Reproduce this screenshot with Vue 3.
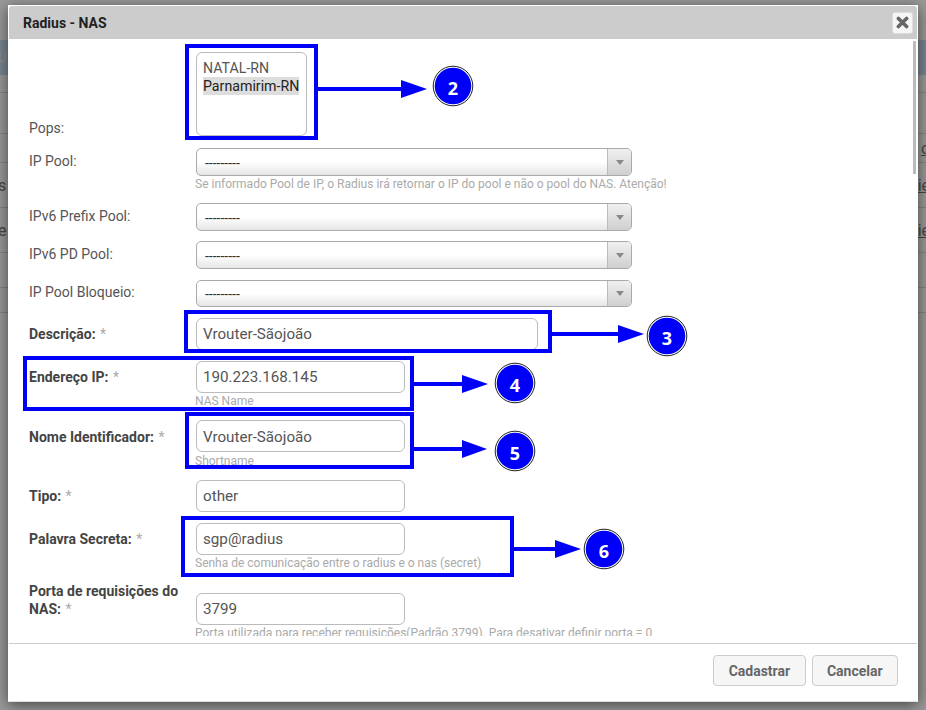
<script setup>
const fields = [
  { label: 'IP Pool:', type: 'is-select', help: 'Se informado Pool de IP, o Radius irá retornar o IP do pool e não o pool do NAS. Atenção!', cls: 'g11' },
  { label: 'IPv6 Prefix Pool:', type: 'is-select', cls: 'g10' },
  { label: 'IPv6 PD Pool:', type: 'is-select', cls: 'g11' },
  { label: 'IP Pool Bloqueio:', type: 'is-select', cls: 'g11 short' },
  { label: 'Descrição:', req: true, type: 'is-input', value: 'Vrouter-Sãojoão', cls: 'g11 wide' },
  { label: 'Endereço IP:', req: true, type: 'is-input', value: '190.223.168.145', help: 'NAS Name', cls: 'g12' },
  { label: 'Nome Identificador:', req: true, type: 'is-input', value: 'Vrouter-Sãojoão', help: 'Shortname', cls: 'g12 nudge' },
  { label: 'Tipo:', req: true, type: 'is-input', value: 'other', cls: 'g11' },
  { label: 'Palavra Secreta:', req: true, type: 'is-input', value: 'sgp@radius', help: 'Senha de comunicação entre o radius e o nas (secret)', cls: 'g12' },
  { label: 'Porta de requisições do NAS:', req: true, type: 'is-input', value: '3799', help: 'Porta utilizada para receber requisições(Padrão 3799). Para desativar definir porta = 0', cls: 'tall' }
]

const callouts = [
  { n: 2, box: [187, 46, 129, 92], y: 89, x1: 318, x2: 401, tip: 427, cx: 453, cy: 86 },
  { n: 3, box: [186, 312, 364, 39], y: 334, x1: 552, x2: 618, tip: 644, cx: 667, cy: 336 },
  { n: 4, box: [25, 358, 387, 51], y: 384, x1: 414, x2: 462, tip: 488, cx: 515, cy: 383 },
  { n: 5, box: [187, 414, 225, 53], y: 449, x1: 414, x2: 462, tip: 487, cx: 515, cy: 451 },
  { n: 6, box: [183, 518, 329, 57], y: 549, x1: 514, x2: 555, tip: 581, cx: 604, cy: 549 }
]

const bgRows = [
  { h: 18, left: '', right: '' },
  { h: 41, left: '', right: '' },
  { h: 29, left: '', right: 'o' },
  { h: 45, left: 's', right: 'ie' },
  { h: 45, left: 'e', right: 'ie' },
  { h: 35, left: '', right: '' },
  { h: 25, left: '', right: '' }
]
</script>

<template>
  <div class="page">
    <div class="bg-top"></div>
    <div class="bg-band"><span>US</span></div>
    <div v-for="(r, i) in bgRows" :key="i" class="bg-row" :style="{ height: r.h + 'px' }">
      <span class="bg-l">{{ r.left }}</span>
      <span class="bg-r">{{ r.right }}</span>
    </div>
    <div class="backdrop"></div>

    <div class="dialog">
      <header class="head">
        <h2>Radius - NAS</h2>
        <button class="close" aria-label="Fechar">
          <svg width="13" height="13" viewBox="0 0 13 13"><path d="M2.4 2.4l8.2 8.2M10.6 2.4l-8.2 8.2" stroke="#666" stroke-width="3.6" stroke-linecap="round" fill="none" /></svg>
        </button>
      </header>

      <div class="body">
        <div class="scroll">
          <div class="row pops">
            <label>Pops:</label>
            <div class="list">
              <div class="opt">NATAL-RN</div>
              <div class="opt sel">Parnamirim-RN</div>
            </div>
          </div>

          <div v-for="f in fields" :key="f.label" class="row" :class="[f.type, f.cls]">
            <label><b v-if="f.req">{{ f.label }}</b><template v-else>{{ f.label }}</template><i v-if="f.req"> *</i></label>
            <div class="ctl">
              <div v-if="f.type === 'is-select'" class="select">
                <span>---------</span>
                <em><u></u></em>
              </div>
              <div v-else class="input">{{ f.value }}</div>
              <small v-if="f.help">{{ f.help }}</small>
            </div>
          </div>
        </div>
        <div class="thumb"></div>
      </div>

      <footer class="foot">
        <button>Cadastrar</button>
        <button>Cancelar</button>
      </footer>
    </div>

    <svg class="marks" width="926" height="710" viewBox="0 0 926 710">
      <g v-for="c in callouts" :key="c.n">
        <rect :x="c.box[0]" :y="c.box[1]" :width="c.box[2]" :height="c.box[3]" fill="none" stroke="#0000f8" stroke-width="4" />
        <rect :x="c.x1" :y="c.y - 2" :width="c.x2 - c.x1" height="4" fill="#0000f8" />
        <polygon :points="`${c.x2},${c.y - 9} ${c.tip},${c.y} ${c.x2},${c.y + 9}`" fill="#0000f8" />
        <circle :cx="c.cx" :cy="c.cy" r="19.8" fill="#fff" stroke="#222" stroke-width="1" />
        <circle :cx="c.cx" :cy="c.cy" r="18.3" fill="#0000f8" />
        <text :x="c.cx" :y="c.cy + 8.5" text-anchor="middle" class="num">{{ c.n }}</text>
      </g>
    </svg>
  </div>
</template>

<style scoped>
.page { position: relative; width: 926px; height: 710px; overflow: hidden; background: #fff; font-family: Roboto, "Liberation Sans", sans-serif; color: #555; }
.bg-top { height: 40px; }
.bg-band { height: 35px; background: #c9dff0; color: #eee; font-size: 14px; line-height: 35px; }
.bg-band span { margin-left: -2px; }
.bg-row { box-sizing: border-box; border-bottom: 1px solid #ddd; display: flex; justify-content: space-between; align-items: center; font-size: 16px; color: #777; }
.bg-r { text-decoration: underline; margin-right: -4px; }
.bg-l { margin-left: -2px; }
.backdrop { position: absolute; inset: 0; background: rgba(0, 0, 0, .4); }

.dialog { position: absolute; left: 8px; top: 5px; width: 910px; height: 697px; box-sizing: border-box; background: #fff; border: 1px solid #fff; border-bottom-color: #ddd; box-shadow: 0 3px 14px rgba(0, 0, 0, .55); display: flex; flex-direction: column; }
.head { height: 33px; flex: none; background: #ccc; display: flex; align-items: center; justify-content: space-between; padding: 0 4px 0 14px; border-radius: 3px 3px 0 0; }
h2 { margin: 0; font-size: 14px; font-weight: 700; color: #222; }
.close { width: 21px; height: 22px; padding: 0; border: 1px solid #ddd; border-radius: 3px; background: #f6f6f6; display: flex; align-items: center; justify-content: center; }

.body { position: relative; height: 604px; flex: none; padding-bottom: 7px; box-sizing: border-box; }
.scroll { height: 597px; overflow: hidden; box-sizing: border-box; padding: 13px 0 0 20px; }
.thumb { position: absolute; right: 1px; top: 2px; width: 3px; height: 133px; background: #bbb; }

.row { display: flex; align-items: flex-start; font-size: 14px; line-height: 18px; }
.row > label { width: 167px; flex: none; box-sizing: border-box; padding-right: 10px; }
.pops > label { margin-bottom: -1px; }
.is-select > label { margin-top: 4px; }
.is-input > label { margin-top: 7px; }
.row.short > label { margin-top: 3px; }
.row.nudge > label { margin-top: 8px; }
.row.tall > label { margin-top: 0; }
.row b { font-weight: 700; color: #444; }
.row i { font-style: normal; color: #aaa; margin-left: 1px; }
.g10 { margin-bottom: 10px; }
.g11 { margin-bottom: 11px; }
.g12 { margin-bottom: 12px; }
.pops { height: 84px; align-items: flex-end; margin-bottom: 12px; }
.list { width: 111px; height: 84px; box-sizing: border-box; border: 1px solid #bbb; border-radius: 6px; padding: 6px 6px; color: #555; font-size: 14.2px; line-height: 18px; }
.opt { white-space: nowrap; }
.sel { background: #ddd; color: #222; width: max-content; }

.select { width: 436px; height: 28px; box-sizing: border-box; border: 1px solid #aaa; border-radius: 5px; background: linear-gradient(#fff 50%, #e6e6e6); display: flex; justify-content: space-between; font-size: 14px; line-height: 28px; color: #333; overflow: hidden; }
.select span { margin-left: 8px; }
.select em { width: 23px; border-left: 1px solid #bbb; background: linear-gradient(#f0f0f0, #cfcfcf); display: flex; align-items: center; justify-content: center; }
.select u { width: 0; height: 0; border: 4px solid transparent; border-top: 5px solid #888; border-bottom: 0; }
.short .select { height: 27px; line-height: 27px; }
.input { width: 209px; height: 32px; box-sizing: border-box; border: 1px solid #bbb; border-radius: 6px; padding: 0 6px; font-size: 15.2px; line-height: 30px; color: #555; }
.nudge .input { line-height: 32px; }
.wide .input { width: 342px; }
.ctl small { display: block; margin-left: -1px; height: 16px; font-size: 12px; line-height: 16px; color: #aaa; white-space: nowrap; }
.g12 .ctl small { height: 15px; }
.g12.nudge .ctl small { height: 16px; line-height: 18px; }
.tall .ctl { padding-top: 11px; }

.foot { flex: 1; border-top: 1px solid #ccc; display: flex; justify-content: flex-end; align-items: flex-start; gap: 6px; padding: 11px 19px 0 0; }
.foot button { height: 31px; padding: 0 14.4px; border: 1px solid #ccc; border-radius: 4px; background: #f6f6f6; font: 700 14px Roboto, sans-serif; color: #666; }

.marks { position: absolute; left: 0; top: 0; }
.num { font: 700 18px "Open Sans", sans-serif; fill: #fff; }
</style>

<style>
html, body { margin: 0; overflow: hidden; }
</style>
